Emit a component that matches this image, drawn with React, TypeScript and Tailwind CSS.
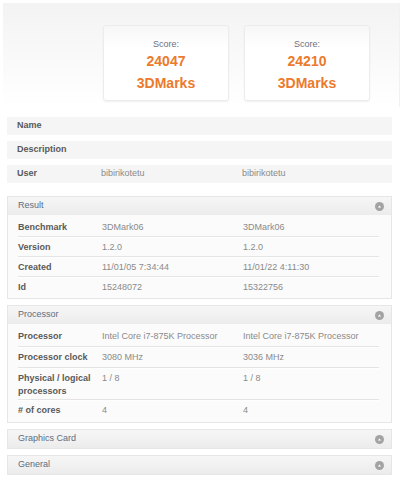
import React from "react"

const FONT = { fontFamily: '"Liberation Sans", Arial, sans-serif' }

interface Row {
  label: string
  a: string
  b: string
}

const RESULT: Row[] = [
  { label: "Benchmark", a: "3DMark06", b: "3DMark06" },
  { label: "Version", a: "1.2.0", b: "1.2.0" },
  { label: "Created", a: "11/01/05 7:34:44", b: "11/01/22 4:11:30" },
  { label: "Id", a: "15248072", b: "15322756" },
]

const PROCESSOR: Row[] = [
  { label: "Processor", a: "Intel Core i7-875K Processor", b: "Intel Core i7-875K Processor" },
  { label: "Processor clock", a: "3080 MHz", b: "3036 MHz" },
  { label: "Physical / logical processors", a: "1 / 8", b: "1 / 8" },
  { label: "# of cores", a: "4", b: "4" },
]

function ToggleIcon() {
  return (
    <svg width="9" height="9" viewBox="0 0 9 9" className="shrink-0">
      <circle cx="4.5" cy="4.5" r="4.5" fill="#a3a3a3" />
      <path d="M2.8 5.4 L4.5 3.4 L6.2 5.4 Z" fill="#ffffff" />
    </svg>
  )
}

function ScoreCard({ score }: { score: string }) {
  return (
    <div className="flex h-[76px] w-[126px] flex-col items-center rounded-[3px] border border-[#ececec] bg-gradient-to-b from-[#f7f7f7] to-white to-[30%] pt-[12px] shadow-[0_1px_2px_rgba(0,0,0,0.06)]">
      <div className="text-[9px] leading-[12px] text-[#6b7280]">Score:</div>
      <div className="mt-[1px] text-[14px] font-bold leading-[21px] text-[#ec7a2c]">{score}</div>
      <div className="text-[14px] font-bold leading-[22px] text-[#ec7a2c]">3DMarks</div>
    </div>
  )
}

function SectionHeader({ title }: { title: string }) {
  return (
    <div className="flex h-[18px] items-center justify-between bg-gradient-to-b from-[#f6f6f6] to-[#ececec] pl-[10px] pr-[7px]">
      <span className="text-[9px] text-[#5e6c80]">{title}</span>
      <ToggleIcon />
    </div>
  )
}

function Section({ title, rows, tall }: { title: string; rows?: Row[]; tall?: boolean }) {
  return (
    <div className="border border-[#e6e6e6] bg-[#fbfbfb]">
      <SectionHeader title={title} />
      {rows && (
        <div className="pb-[2px] pl-[10px] pr-[12px] pt-[2px]">
          {rows.map((r, i) => (
            <div
              key={r.label}
              className={`flex pt-[4px] text-[9px] ${tall ? "leading-[13px]" : "leading-[12px]"} ${
                r.label.length > 20 ? "pb-[1px]" : "pb-[3px]"
              } ${i < rows.length - 1 ? "border-b border-[#e4e4e4] shadow-[0_1px_0_#ffffff]" : ""}`}
            >
              <div className="w-[84px] shrink-0 font-bold text-[#595959]">{r.label}</div>
              <div className="w-[141px] shrink-0 text-[#8a8a8a]">{r.a}</div>
              <div className="text-[#8a8a8a]">{r.b}</div>
            </div>
          ))}
        </div>
      )}
    </div>
  )
}

function InfoRow({ label, a, b }: { label: string; a?: string; b?: string }) {
  return (
    <div className="flex h-[18px] items-center bg-[#f5f5f5] pl-[10px] text-[9px]">
      <div className="w-[84px] shrink-0 font-bold text-[#595959]">{label}</div>
      <div className="w-[141px] shrink-0 text-[#8a8a8a]">{a}</div>
      <div className="text-[#8a8a8a]">{b}</div>
    </div>
  )
}

export default function App() {
  return (
    <div style={FONT} className="h-[480px] w-[409px] overflow-hidden bg-white">
      <div className="ml-[3px] mr-[9px] mt-[3px] h-[104px] border-r border-[#f1f1f1] bg-gradient-to-b from-[#f3f3f3] to-white pl-[100px] pt-[22px]">
        <div className="flex gap-[15px]">
          <ScoreCard score="24047" />
          <ScoreCard score="24210" />
        </div>
      </div>

      <div className="mx-[7px] mt-[10px] w-[385px]">
        <div className="flex flex-col gap-[6px]">
          <InfoRow label="Name" />
          <InfoRow label="Description" />
          <InfoRow label="User" a="bibirikotetu" b="bibirikotetu" />
        </div>

        <div className="mt-[13px] flex flex-col gap-[6px]">
          <Section title="Result" rows={RESULT} />
          <Section title="Processor" rows={PROCESSOR} tall />
          <Section title="Graphics Card" />
          <Section title="General" />
        </div>
      </div>
    </div>
  )
}
